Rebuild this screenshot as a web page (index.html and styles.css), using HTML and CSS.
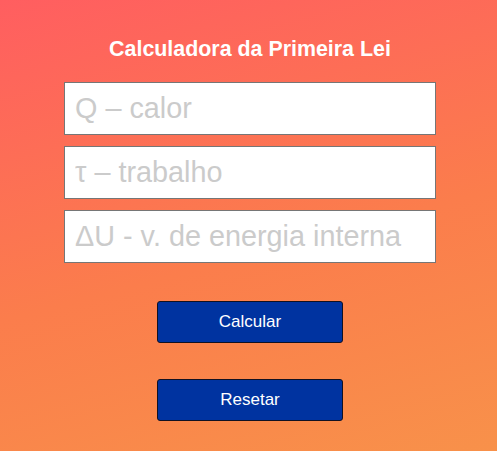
FILE: index.html
```html
<!DOCTYPE html>
<html lang="pt">
<head>
<meta charset="utf-8">
<title>Calculadora da Primeira Lei</title>
<link rel="stylesheet" href="styles.css">
</head>
<body>
<main class="calc">
  <h1 class="title">Calculadora da Primeira Lei</h1>
  <div class="fields">
    <input class="field" type="text" placeholder="Q – calor">
    <input class="field" type="text" placeholder="τ – trabalho">
    <input class="field" type="text" placeholder="ΔU - v. de energia interna">
  </div>
  <div class="actions">
    <button class="btn" type="button">Calcular</button>
    <button class="btn" type="button">Resetar</button>
  </div>
</main>
</body>
</html>
```

FILE: styles.css
```css
html, body {
  margin: 0;
  height: 100%;
}
body {
  background: linear-gradient(165deg, #ff5e60 0%, #fb7d4c 55%, #f8914a 100%);
  font-family: "Liberation Sans", Arial, sans-serif;
}
.calc {
  display: flex;
  flex-direction: column;
  align-items: center;
  padding: 37px 0 0 3px;
}
.title {
  margin: 0;
  color: #ffffff;
  font-size: 21.4px;
  font-weight: bold;
  line-height: 25px;
}
.fields {
  display: flex;
  flex-direction: column;
  gap: 11px;
  margin-top: 20px;
}
.field {
  box-sizing: border-box;
  width: 372px;
  height: 53px;
  margin: 0;
  padding: 0 10px;
  border: 1px solid #767676;
  background: #ffffff;
  font-family: "Liberation Sans", Arial, sans-serif;
  font-size: 28.8px;
  color: #333;
  outline: none;
}
.field::placeholder {
  color: #cbcbcb;
  opacity: 1;
}
.actions {
  display: flex;
  flex-direction: column;
  gap: 36px;
  margin-top: 38px;
}
.btn {
  box-sizing: border-box;
  width: 186px;
  height: 42px;
  margin: 0;
  border: 1px solid #111122;
  border-radius: 3px;
  background: #0033a0;
  color: #ffffff;
  font-family: "Liberation Sans", Arial, sans-serif;
  font-size: 17px;
  cursor: pointer;
}
```
